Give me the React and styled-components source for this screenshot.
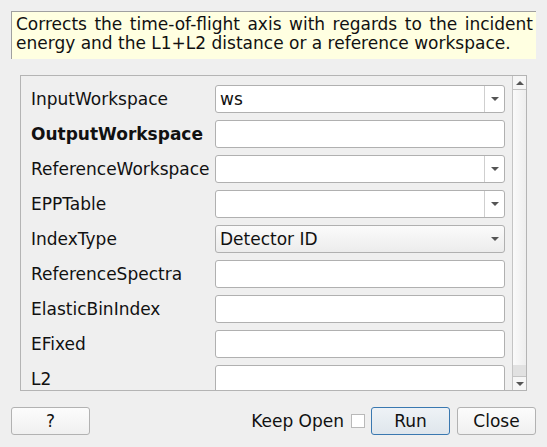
import React from "react";
import styled, { createGlobalStyle } from "styled-components";

const GlobalStyle = createGlobalStyle`
  html, body {
    margin: 0;
    padding: 0;
    background: #efefef;
  }
  * { box-sizing: border-box; }
`;

const Dialog = styled.div`
  width: 547px;
  height: 447px;
  padding: 11px;
  background: #efefef;
  display: flex;
  flex-direction: column;
  font-family: "DejaVu Sans", "Liberation Sans", sans-serif;
  font-size: 17px;
  color: #111;
  overflow: hidden;
`;

const Description = styled.div`
  height: 48px;
  background: #ffffe1;
  border-top: 1px solid #a0a0a0;
  border-left: 1px solid #a0a0a0;
  padding: 3px 3px 0 4px;
  line-height: 19px;
  text-align: justify;
`;

const ScrollArea = styled.div`
  margin: 16px 9px 0 9px;
  height: 316px;
  border: 1px solid #b4b4b4;
  display: flex;
`;

const Content = styled.div`
  flex: 1;
  overflow: hidden;
  padding: 9px 7px 0 10px;
  display: grid;
  grid-template-columns: 184px 290px;
  grid-auto-rows: 28px;
  row-gap: 7px;
  align-items: center;
`;

const Label = styled.div`
  font-weight: ${(p) => (p.bold ? "bold" : "normal")};
  white-space: nowrap;
`;

const Field = styled.div`
  height: 28px;
  border: 1px solid #b0b0b0;
  border-radius: 3px;
  background: ${(p) =>
    p.button ? "linear-gradient(#fbfbfb, #ececec)" : "#ffffff"};
  display: flex;
  align-items: center;
  padding-left: 4px;
`;

const FieldText = styled.span`
  flex: 1;
`;

const ArrowBox = styled.div`
  width: 20px;
  height: 100%;
  display: flex;
  align-items: center;
  justify-content: center;
  border-left: 1px solid ${(p) => (p.split ? "#cfcfcf" : "transparent")};
`;

const Triangle = styled.div`
  width: 0;
  height: 0;
  border-left: 4px solid transparent;
  border-right: 4px solid transparent;
  border-top: ${(p) => (p.up ? "none" : "4px solid #555")};
  border-bottom: ${(p) => (p.up ? "4px solid #555" : "none")};
`;

const ScrollBar = styled.div`
  width: 14px;
  border-left: 1px solid #c4c4c4;
  display: flex;
  flex-direction: column;
`;

const ScrollButton = styled.div`
  height: 14px;
  display: flex;
  align-items: center;
  justify-content: center;
  background: #f6f6f6;
  border-bottom: ${(p) => (p.top ? "1px solid #c4c4c4" : "none")};
  border-top: ${(p) => (p.top ? "none" : "1px solid #c4c4c4")};
`;

const Slider = styled.div`
  flex: 1;
  background: linear-gradient(90deg, #fafafa, #eeeeee);
`;

const Track = styled.div`
  height: 11px;
  background: #e1e1e1;
`;

const Footer = styled.div`
  margin-top: 16px;
  display: flex;
  align-items: center;
  height: 28px;
`;

const Button = styled.button`
  width: 79px;
  height: 28px;
  font-family: inherit;
  font-size: 17px;
  color: #111;
  border-radius: 3px;
  border: 1px solid ${(p) => (p.primary ? "#3a78b0" : "#b2b2b2")};
  background: ${(p) =>
    p.primary
      ? "linear-gradient(#eef2f6, #dfe6ec)"
      : "linear-gradient(#fcfcfc, #f0f0f0)"};
  padding: 0;
  margin-left: ${(p) => p.gap || 0}px;
`;

const Spacer = styled.div`
  flex: 1;
`;

const KeepOpen = styled.span`
  margin-right: 7px;
`;

const CheckBox = styled.div`
  width: 14px;
  height: 14px;
  background: #fff;
  border: 1px solid #b9b9b9;
`;

const rows = [
  { label: "InputWorkspace", value: "ws", kind: "combo" },
  { label: "OutputWorkspace", bold: true },
  { label: "ReferenceWorkspace", kind: "combo" },
  { label: "EPPTable", kind: "combo" },
  { label: "IndexType", value: "Detector ID", kind: "select" },
  { label: "ReferenceSpectra" },
  { label: "ElasticBinIndex" },
  { label: "EFixed" },
  { label: "L2" },
];

export default function App() {
  return (
    <>
      <GlobalStyle />
      <Dialog>
        <Description>
          Corrects the time-of-flight axis with regards to the incident
          energy and the L1+L2 distance or a reference workspace.
        </Description>
        <ScrollArea>
          <Content>
            {rows.map((r) => (
              <React.Fragment key={r.label}>
                <Label bold={r.bold}>{r.label}</Label>
                <Field button={r.kind === "select"}>
                  <FieldText>{r.value}</FieldText>
                  {r.kind && (
                    <ArrowBox split={r.kind === "combo"}>
                      <Triangle />
                    </ArrowBox>
                  )}
                </Field>
              </React.Fragment>
            ))}
          </Content>
          <ScrollBar>
            <ScrollButton top>
              <Triangle up />
            </ScrollButton>
            <Slider />
            <Track />
            <ScrollButton>
              <Triangle />
            </ScrollButton>
          </ScrollBar>
        </ScrollArea>
        <Footer>
          <Button>?</Button>
          <Spacer />
          <KeepOpen>Keep Open</KeepOpen>
          <CheckBox />
          <Button primary gap={6}>Run</Button>
          <Button gap={7}>Close</Button>
        </Footer>
      </Dialog>
    </>
  );
}
